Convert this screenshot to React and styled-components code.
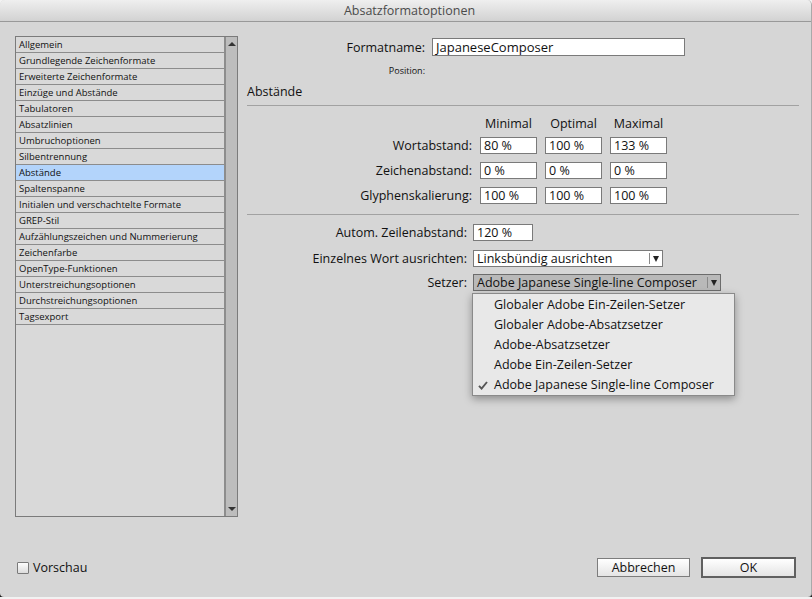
import React from 'react';
import styled, { createGlobalStyle } from 'styled-components';

const GlobalStyle = createGlobalStyle`
  html, body {
    margin: 0;
    padding: 0;
  }
  body {
    background: linear-gradient(#f2f2f2 0, #f2f2f2 590px, #1c1c1c 590px);
    font-family: "Open Sans", "DejaVu Sans", sans-serif;
    color: #111;
  }
`;

const Window = styled.div`
  width: 812px;
  height: 597px;
  background: #d6d6d6;
  border-radius: 5px 5px 4px 4px;
  display: flex;
  flex-direction: column;
  overflow: hidden;
  box-sizing: border-box;
  border-right: 1px solid #a9a9a9;
`;

const TitleBar = styled.div`
  height: 21px;
  flex: none;
  background: linear-gradient(#efefef, #d2d2d2);
  border-bottom: 1px solid #999;
  display: flex;
  align-items: center;
  justify-content: center;
  font-size: 12.5px;
  color: #4b4b4b;
  padding-left: 8px;
`;

const Body = styled.div`
  flex: 1;
  display: flex;
  padding: 14px 0 0 15px;
  min-height: 0;
`;

const List = styled.div`
  width: 223px;
  height: 481px;
  box-sizing: border-box;
  border: 1px solid #7b7b7b;
  background: #d9d9d9;
  display: flex;
  flex: none;
`;

const Rows = styled.div`
  flex: 1;
  display: flex;
  flex-direction: column;
`;

const Row = styled.div`
  height: 16px;
  box-sizing: border-box;
  border-bottom: 1px solid #8c8c8c;
  padding-left: 3px;
  font-size: 9.5px;
  line-height: 15px;
  white-space: nowrap;
  color: #111;
  background: ${p => (p.$selected ? '#b3d4fb' : 'transparent')};
`;

const Scrollbar = styled.div`
  width: 11px;
  border-left: 2px solid #8d8d8d;
  background: #bdbdbd;
  display: flex;
  flex-direction: column;
  justify-content: space-between;
  align-items: center;
  padding: 5px 0 5px;
`;

const Arrow = styled.div`
  width: 0;
  height: 0;
  border-left: 4px solid transparent;
  border-right: 4px solid transparent;
  ${p => (p.$down ? 'border-top: 4px solid #333;' : 'border-bottom: 4px solid #333;')}
`;

const Content = styled.div`
  flex: 1;
  margin-left: 9px;
  padding: 2px 12px 0 0;
  display: flex;
  flex-direction: column;
  font-size: 12.5px;
`;

const FormGrid = styled.div`
  display: grid;
  grid-template-columns: ${p => p.$label}px auto;
  column-gap: ${p => p.$gap}px;
  align-items: center;
  margin-top: ${p => p.$top || 0}px;
  row-gap: ${p => p.$rowGap || 0}px;
`;

const Label = styled.div`
  text-align: right;
  white-space: nowrap;
  font-size: ${p => (p.$small ? '9px' : '12.5px')};
  line-height: ${p => (p.$small ? '12px' : '17px')};
`;

const TextField = styled.div`
  width: ${p => p.$w}px;
  height: ${p => p.$h || 17}px;
  box-sizing: border-box;
  border: 1px solid #7a7a7a;
  background: #fff;
  padding-left: 3px;
  font-size: ${p => (p.$big ? '13px' : '12.5px')};
  line-height: ${p => (p.$h || 17) - 2}px;
  white-space: nowrap;
  overflow: hidden;
`;

const SectionTitle = styled.div`
  margin-top: 7px;
  font-size: 12.5px;
  line-height: 16px;
`;

const Divider = styled.div`
  height: 1px;
  background: #a2a2a2;
  margin-top: ${p => p.$top}px;
`;

const Group = styled.div`
  display: flex;
  gap: 8px;
`;

const HeadGroup = styled(Group)`
  margin-bottom: -3px;
`;

const ColHead = styled.div`
  width: 57px;
  text-align: center;
  line-height: 16px;
`;

const SelectWrap = styled.div`
  position: relative;
  width: ${p => p.$w}px;
  margin-top: ${p => p.$shift || 0}px;
`;

const Select = styled.div`
  height: 17px;
  box-sizing: border-box;
  border: 1px solid ${p => (p.$open ? '#6c6c6c' : '#7a7a7a')};
  background: ${p => (p.$open ? '#b9b9b9' : '#fff')};
  display: flex;
  align-items: center;
  padding-left: 3px;
  white-space: nowrap;
`;

const SelectText = styled.span`
  flex: 1;
  line-height: 15px;
`;

const SelectArrow = styled.div`
  width: 12px;
  height: 11px;
  border-left: 1px solid #8a8a8a;
  display: flex;
  align-items: center;
  justify-content: center;
  &::after {
    content: '';
    border-left: 3.5px solid transparent;
    border-right: 3.5px solid transparent;
    border-top: 6px solid #222;
  }
`;

const Menu = styled.div`
  position: absolute;
  top: 19px;
  left: -1px;
  width: 263px;
  box-sizing: border-box;
  border: 1px solid #8a8a8a;
  padding-top: 1px;
  background: #e8e8e8;
  box-shadow: 0 3px 8px rgba(0, 0, 0, 0.35);
  z-index: 5;
`;

const MenuItem = styled.div`
  position: relative;
  height: 20px;
  line-height: 20px;
  padding-left: 21px;
  white-space: nowrap;
  color: #111;
`;

const Check = styled.svg`
  position: absolute;
  left: 5px;
  top: 6px;
`;

const Footer = styled.div`
  flex: none;
  height: 21px;
  display: flex;
  align-items: center;
  padding: 0 15px 19px 17px;
  font-size: 12.5px;
`;

const CheckBox = styled.div`
  width: 12px;
  height: 12px;
  box-sizing: border-box;
  border: 1px solid #7a7a7a;
  border-radius: 1px;
  background: linear-gradient(#fdfdfd, #dcdcdc);
  margin-right: 4px;
`;

const Spacer = styled.div`
  flex: 1;
`;

const Button = styled.div`
  width: ${p => p.$w}px;
  height: ${p => (p.$default ? 21 : 19)}px;
  box-sizing: border-box;
  border: ${p => (p.$default ? '2px solid #606060' : '1px solid #7d7d7d')};
  background: linear-gradient(#ffffff, #e4e4e4);
  display: flex;
  align-items: center;
  justify-content: center;
  margin-left: ${p => p.$gap || 0}px;
`;

const items = [
  'Allgemein',
  'Grundlegende Zeichenformate',
  'Erweiterte Zeichenformate',
  'Einzüge und Abstände',
  'Tabulatoren',
  'Absatzlinien',
  'Umbruchoptionen',
  'Silbentrennung',
  'Abstände',
  'Spaltenspanne',
  'Initialen und verschachtelte Formate',
  'GREP-Stil',
  'Aufzählungszeichen und Nummerierung',
  'Zeichenfarbe',
  'OpenType-Funktionen',
  'Unterstreichungsoptionen',
  'Durchstreichungsoptionen',
  'Tagsexport',
];

const spacing = [
  ['Wortabstand:', '80 %', '100 %', '133 %'],
  ['Zeichenabstand:', '0 %', '0 %', '0 %'],
  ['Glyphenskalierung:', '100 %', '100 %', '100 %'],
];

const composers = [
  'Globaler Adobe Ein-Zeilen-Setzer',
  'Globaler Adobe-Absatzsetzer',
  'Adobe-Absatzsetzer',
  'Adobe Ein-Zeilen-Setzer',
  'Adobe Japanese Single-line Composer',
];

const current = 'Adobe Japanese Single-line Composer';

const App = () => (
  <>
    <GlobalStyle />
    <Window>
      <TitleBar>Absatzformatoptionen</TitleBar>
      <Body>
        <List>
          <Rows>
            {items.map(item => (
              <Row key={item} $selected={item === 'Abstände'}>
                {item}
              </Row>
            ))}
          </Rows>
          <Scrollbar>
            <Arrow />
            <Arrow $down />
          </Scrollbar>
        </List>
        <Content>
          <FormGrid $label={178} $gap={7}>
            <Label>Formatname:</Label>
            <TextField $w={253} $h={18} $big>JapaneseComposer</TextField>
          </FormGrid>
          <FormGrid $label={178} $gap={7} $top={9}>
            <Label $small>Position:</Label>
            <div />
          </FormGrid>
          <SectionTitle>Abstände</SectionTitle>
          <Divider $top={5} />
          <FormGrid $label={225} $gap={8} $top={10} $rowGap={8}>
            <div />
            <HeadGroup>
              <ColHead>Minimal</ColHead>
              <ColHead>Optimal</ColHead>
              <ColHead>Maximal</ColHead>
            </HeadGroup>
            {spacing.map(([label, ...values]) => (
              <React.Fragment key={label}>
                <Label>{label}</Label>
                <Group>
                  {values.map((v, i) => (
                    <TextField key={i} $w={57}>{v}</TextField>
                  ))}
                </Group>
              </React.Fragment>
            ))}
          </FormGrid>
          <Divider $top={10} />
          <FormGrid $label={220} $gap={6} $top={9} $rowGap={9}>
            <Label>Autom. Zeilenabstand:</Label>
            <TextField $w={60}>120 %</TextField>
            <Label>Einzelnes Wort ausrichten:</Label>
            <SelectWrap $w={190}>
              <Select>
                <SelectText>Linksbündig ausrichten</SelectText>
                <SelectArrow />
              </Select>
            </SelectWrap>
            <Label style={{ marginTop: -2 }}>Setzer:</Label>
            <SelectWrap $w={248} $shift={-2}>
              <Select $open>
                <SelectText>{current}</SelectText>
                <SelectArrow />
              </Select>
              <Menu>
                {composers.map(c => (
                  <MenuItem key={c}>
                    {c === current && (
                      <Check width="10" height="9" viewBox="0 0 10 9">
                        <path d="M1 4.8 L3.6 7.6 L9 1" fill="none" stroke="#555" strokeWidth="1.9" />
                      </Check>
                    )}
                    {c}
                  </MenuItem>
                ))}
              </Menu>
            </SelectWrap>
          </FormGrid>
        </Content>
      </Body>
      <Footer>
        <CheckBox />
        <span>Vorschau</span>
        <Spacer />
        <Button $w={93}>Abbrechen</Button>
        <Button $w={95} $gap={11} $default>OK</Button>
      </Footer>
    </Window>
  </>
);

export default App;
